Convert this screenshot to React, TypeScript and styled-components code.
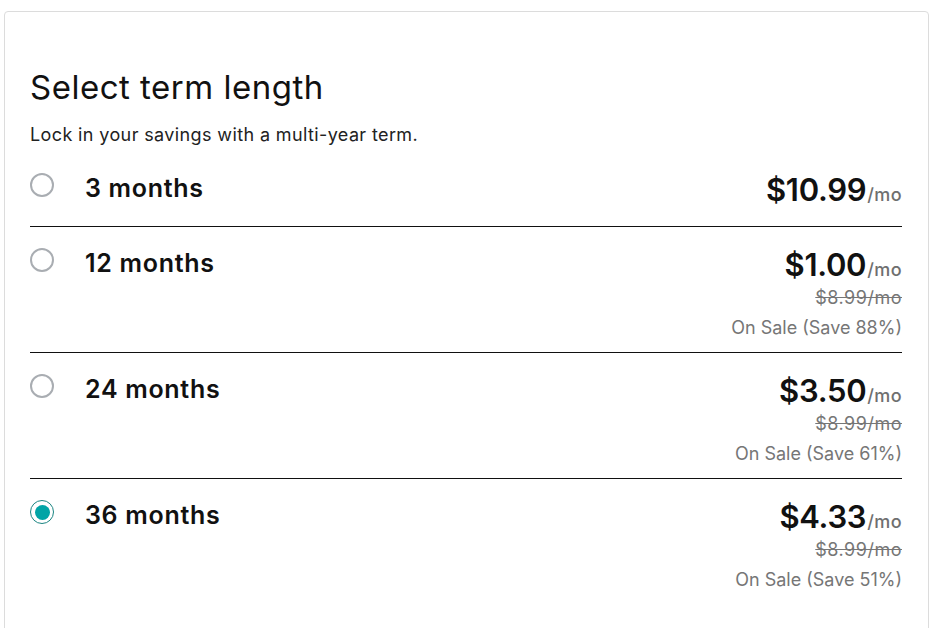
import styled, { createGlobalStyle } from "styled-components";

const GlobalStyle = createGlobalStyle`
	body {
		margin: 0;
		background: #ffffff;
		font-family: Inter, "Noto Sans", sans-serif;
		color: #111111;
	}
`;

interface Term {
	label: string;
	price: string;
	was?: string;
	save?: string;
	selected?: boolean;
}

const terms: Term[] = [
	{ label: "3 months", price: "$10.99" },
	{ label: "12 months", price: "$1.00", was: "$8.99/mo", save: "On Sale (Save 88%)" },
	{ label: "24 months", price: "$3.50", was: "$8.99/mo", save: "On Sale (Save 61%)" },
	{ label: "36 months", price: "$4.33", was: "$8.99/mo", save: "On Sale (Save 51%)", selected: true },
];

const Page = styled.div`
	padding: 11px 7px 0 4px;
	height: 628px;
	box-sizing: border-box;
	overflow: hidden;
`;

const Card = styled.section`
	border: 1px solid #dcdcdc;
	border-radius: 4px;
	padding: 55px 26px 40px 25px;
	min-height: 640px;
	box-sizing: border-box;
`;

const Title = styled.h2`
	margin: 0;
	font-size: 33px;
	line-height: 40px;
	font-weight: 400;
	color: #111111;
	letter-spacing: 0.5px;
`;

const Subtitle = styled.p`
	margin: 16px 0 5px;
	font-size: 18px;
	line-height: 24px;
	color: #222222;
	letter-spacing: 0.38px;
`;

const List = styled.ul`
	list-style: none;
	margin: 0;
	padding: 0;
`;

const Row = styled.li`
	display: flex;
	align-items: flex-start;
	padding: 20px 0 18px;
	border-bottom: 1px solid #111111;

	&:last-child {
		border-bottom: none;
	}
`;

const Radio = styled.span<{ $checked?: boolean }>`
	flex: none;
	width: 24px;
	height: 24px;
	margin-top: 1px;
	box-sizing: border-box;
	border-radius: 50%;
	border: ${(p) => (p.$checked ? "1.5px solid #1b8582" : "2px solid #a9adb2")};
	display: flex;
	align-items: center;
	justify-content: center;

	&::after {
		content: "";
		display: ${(p) => (p.$checked ? "block" : "none")};
		width: 15px;
		height: 15px;
		border-radius: 50%;
		background: #00a4a6;
	}
`;

const Label = styled.span`
	flex: 1;
	margin-left: 31px;
	margin-top: -2px;
	font-size: 25px;
	line-height: 36px;
	font-weight: 600;
	color: #111111;
	letter-spacing: 0.7px;
`;

const PriceCol = styled.div`
	display: flex;
	flex-direction: column;
	align-items: flex-end;
`;

const Price = styled.div`
	font-size: 31px;
	line-height: 36px;
	height: 36px;
	font-weight: 600;
	color: #111111;
	letter-spacing: -0.3px;
`;

const Per = styled.span`
	font-size: 18px;
	line-height: 1;
	font-weight: 500;
	color: #6f6f6f;
	letter-spacing: 0.4px;
	margin-left: 1px;
`;

const Detail = styled.div<{ $struck?: boolean }>`
	font-size: 18px;
	line-height: 30px;
	color: #767676;
	text-decoration: ${(p) => (p.$struck ? "line-through" : "none")};
	letter-spacing: ${(p) => (p.$struck ? "0.5px" : "0")};

	&:last-child {
		margin-bottom: -9px;
	}
`;

export default function App() {
	return (
		<>
			<GlobalStyle />
			<Page>
				<Card>
					<Title>Select term length</Title>
					<Subtitle>Lock in your savings with a multi-year term.</Subtitle>
					<List>
						{terms.map((t) => (
							<Row key={t.label}>
								<Radio $checked={t.selected} />
								<Label>{t.label}</Label>
								<PriceCol>
									<Price>
										{t.price}
										<Per>/mo</Per>
									</Price>
									{t.was && <Detail $struck>{t.was}</Detail>}
									{t.save && <Detail>{t.save}</Detail>}
								</PriceCol>
							</Row>
						))}
					</List>
				</Card>
			</Page>
		</>
	);
}
